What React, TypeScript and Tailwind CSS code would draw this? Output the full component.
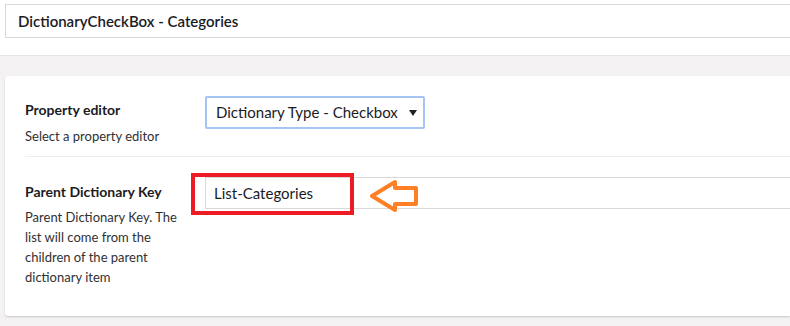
import React from 'react';

const App = () => {
  return (
    <div className="w-[790px] h-[326px] overflow-hidden bg-white font-['Lato','Liberation_Sans',sans-serif] text-[#1b1b1f]">
      <div className="h-[55px] pt-[4px] pl-[5px]">
        <div className="h-[34px] border border-r-0 border-[#d8d7d9] pl-[12px] flex items-center">
          <span className="text-[15px] font-semibold">DictionaryCheckBox - Categories</span>
        </div>
      </div>

      <div className="h-[271px] border-t border-[#e6e5e7] bg-[#f4f2f2] pt-[20px] pl-[5px]">
        <div className="h-[240px] bg-white rounded-l-[3px] shadow-[0_1px_2px_rgba(0,0,0,0.18)] pl-[20px] pt-[20px]">
          <div className="flex pb-[10px]">
            <div className="w-[180px] pt-[4px]">
              <div className="text-[14px] leading-[20px] font-bold">Property editor</div>
              <div className="mt-[6px] text-[13px] leading-[20px] text-[#303033]">Select a property editor</div>
            </div>
            <div className="w-[220px] h-[33px] border-2 border-[#a7c3f3] rounded-[2px] flex items-center justify-between pl-[9px] pr-[6px]">
              <span className="text-[15px] whitespace-nowrap overflow-hidden w-[184px]">Dictionary Type - Checkbox</span>
              <svg width="8" height="6" viewBox="0 0 8 6" className="mt-[1px]">
                <path d="M0 0 L8 0 L4 6 Z" fill="#222" />
              </svg>
            </div>
          </div>

          <div className="border-t border-[#eeedef] pt-[20px] flex">
            <div className="w-[180px] pt-[5px]">
              <div className="text-[14px] leading-[20px] font-bold">Parent Dictionary Key</div>
              <div className="mt-[5px] w-[160px] text-[13px] leading-[20px] text-[#303033]">
                Parent Dictionary Key. The list will come from the children of the parent dictionary item
              </div>
            </div>
            <div className="relative flex-1 h-[32px] border border-r-0 border-[#d8d7d9] pl-[8px] flex items-center">
              <span className="text-[15px]">List-Categories</span>
              <div className="absolute left-[-15px] top-[-5px] w-[163px] h-[42px] border-[4px] border-[#ed1c24]" />
              <svg className="absolute left-[164px] top-[1px]" width="49" height="33" viewBox="0 0 49 33">
                <path
                  d="M2 17 L25 3 L25 9 L46 9 L46 25 L25 25 L25 31 Z"
                  fill="none"
                  stroke="#ff7f27"
                  strokeWidth="4"
                  strokeLinejoin="round"
                />
              </svg>
            </div>
          </div>
        </div>
      </div>
    </div>
  );
};

export default App;
